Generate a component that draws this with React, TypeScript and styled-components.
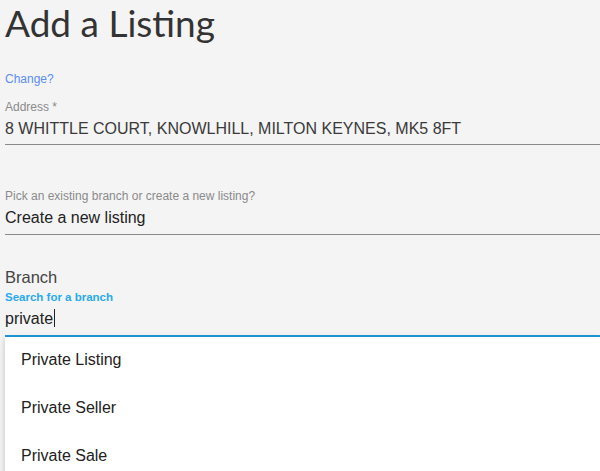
import React from "react";
import styled, { createGlobalStyle } from "styled-components";

const Global = createGlobalStyle`
  html, body { margin: 0; padding: 0; background: #f4f4f4; }
  body { font-family: "Liberation Sans", Arial, sans-serif; overflow: hidden; }
`;

const Page = styled.div`
  width: 600px;
  height: 471px;
  padding-left: 5px;
  box-sizing: border-box;
  background: #f4f4f4;
  overflow: hidden;
`;

const Title = styled.h1`
  margin: 0;
  font-family: Lato, "Open Sans", sans-serif;
  font-weight: 400;
  font-size: 37px;
  line-height: 46px;
  color: #333;
`;

const ChangeLink = styled.a`
  display: block;
  margin-top: 26px;
  font-size: 12px;
  line-height: 14px;
  color: #5b8def;
  text-decoration: none;
`;

const Field = styled.div<{ $top: number; $pad: number; $active?: boolean }>`
  margin-top: ${(p) => p.$top}px;
  border-bottom: ${(p) => (p.$active ? "2px solid #1e9ad9" : "1px solid #8a8a8a")};
  padding-bottom: ${(p) => p.$pad}px;
`;

const Label = styled.div`
  font-size: 12px;
  line-height: 14px;
  color: #8a8a8a;
`;

const Value = styled.div<{ $dark?: boolean }>`
  margin-top: 5px;
  font-size: 16px;
  line-height: 19px;
  color: ${(p) => (p.$dark ? "#222" : "#3a3a3a")};
`;

const BranchTitle = styled.div`
  font-size: 16.5px;
  line-height: 19px;
  color: #444;
`;

const SearchLabel = styled.div`
  margin-top: 3px;
  font-size: 11.5px;
  line-height: 14px;
  font-weight: 700;
  color: #29aaec;
`;

const Cursor = styled.span`
  display: inline-block;
  width: 1px;
  height: 18px;
  background: #222;
  vertical-align: -3px;
  margin-left: 1px;
`;

const Menu = styled.ul`
  list-style: none;
  margin: 0;
  padding: 0;
  background: #fff;
  box-shadow: 0 2px 6px rgba(0, 0, 0, 0.22);
`;

const Item = styled.li`
  height: 48px;
  display: flex;
  align-items: center;
  padding-left: 16px;
  padding-bottom: 2px;
  box-sizing: border-box;
  font-size: 16px;
  color: #222;
`;

export default function App() {
  return (
    <Page>
      <Global />
      <Title>Add a Listing</Title>
      <ChangeLink href="#">Change?</ChangeLink>
      <Field $top={14} $pad={6}>
        <Label>Address *</Label>
        <Value>8 WHITTLE COURT, KNOWLHILL, MILTON KEYNES, MK5 8FT</Value>
      </Field>
      <Field $top={44} $pad={7}>
        <Label>Pick an existing branch or create a new listing?</Label>
        <Value $dark>Create a new listing</Value>
      </Field>
      <Field $top={33} $pad={7} $active>
        <BranchTitle>Branch</BranchTitle>
        <SearchLabel>Search for a branch</SearchLabel>
        <Value $dark>
          private
          <Cursor />
        </Value>
      </Field>
      <Menu>
        <Item>Private Listing</Item>
        <Item>Private Seller</Item>
        <Item>Private Sale</Item>
      </Menu>
    </Page>
  );
}
